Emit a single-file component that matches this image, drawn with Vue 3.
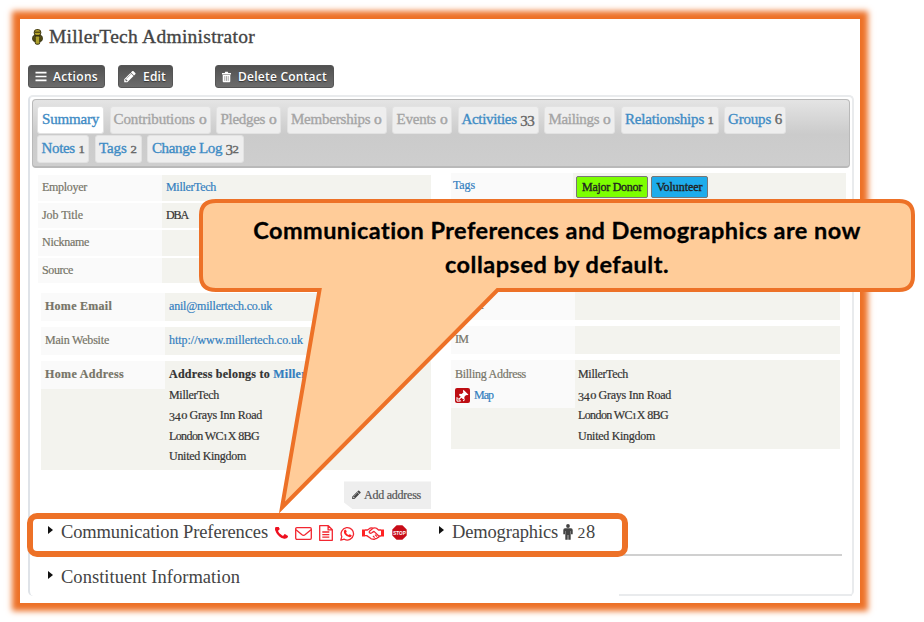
<script setup>
import { h } from 'vue'

// Sets letter spacing so that a label fills its intended measure.
const vFit = {
  mounted(el, { value }) {
    const natural = el.getBoundingClientRect().width
    el.style.letterSpacing = (value - natural) / el.textContent.length + 'px'
  },
}

// Splits digits off so they can be set as old-style figures.
const Txt = (props) =>
  h(
    'span',
    { class: 'txt' },
    props.t.split(/(\d)/).filter(Boolean).map((p) => {
      if (p === '0') return h('span', { class: 'fig fig-x fig-o' }, p)
      if (/[12]/.test(p)) return h('span', { class: 'fig fig-x' }, p)
      if (/[34579]/.test(p)) return h('span', { class: 'fig fig-d' }, p)
      return p
    }),
  )
Txt.props = ['t']

const tabRows = [
  [
    { name: 'Summary', box: 67, fit: 57, active: true },
    { name: 'Contributions', n: '0', box: 101, fit: 93, empty: true },
    { name: 'Pledges', n: '0', box: 65, fit: 56, empty: true },
    { name: 'Memberships', n: '0', box: 100, fit: 91, empty: true },
    { name: 'Events', n: '0', box: 60, fit: 51, empty: true },
    { name: 'Activities', n: '33', box: 81, fit: 73 },
    { name: 'Mailings', n: '0', box: 71, fit: 62, empty: true },
    { name: 'Relationships', n: '1', box: 98, fit: 89 },
    { name: 'Groups', n: '6', box: 62, fit: 54 },
  ],
  [
    { name: 'Notes', n: '1', box: 52, fit: 43 },
    { name: 'Tags', n: '2', box: 47, fit: 38 },
    { name: 'Change Log', n: '32', box: 97, fit: 87 },
  ],
]

const basics = [
  { label: 'Employer', lf: 45, value: 'MillerTech', vf: 50, link: true },
  { label: 'Job Title', lf: 41, value: 'DBA', vf: 22 },
  { label: 'Nickname', lf: 47 },
  { label: 'Source', lf: 31 },
]
const address = [
  { t: 'MillerTech', f: 50 },
  { t: '340 Grays Inn Road', f: 93 },
  { t: 'London WC1X 8BG', f: 90 },
  { t: 'United Kingdom', f: 77 },
]
const pencil =
  'M491 1536l91-91-235-235-91 91v107h128v128h107zm523-928q0-22-22-22-10 0-17 7l-542 542q-7 7-7 17 0 22 22 22 10 0 17-7l542-542q7-7 7-17zm-54-192l416 416-832 832h-416v-416zm683 96q0 53-37 90l-166 166-416-416 166-165q36-38 90-38 53 0 91 38l235 234q37 39 37 91z'
const phone =
  'M1600 1240q0 27-10 70.5t-21 68.5q-21 50-122 106-94 51-186 51-27 0-53-3.5t-57-12.5-47-14.5-55.5-20.5-49.5-18q-98-35-175-83-127-79-264-216t-216-264q-48-77-83-175-3-9-18-49.5t-20.5-55.5-14.5-47-12.5-57-3.5-53q0-92 51-186 56-101 106-122 25-11 68.5-21t70.5-10q14 0 21 3 18 6 53 76 11 19 30 54t35 63.5 31 53.5q3 4 17.5 25t21.5 35.5 7 28.5q0 20-28.5 50t-62 55-62 53-28.5 46q0 9 5 22.5t8.5 20.5 14 24 11.5 19q76 137 174 235t235 174q2 1 19 11.5t24 14 20.5 8.5 22.5 5q18 0 46-28.5t53-62 55-62 50-28.5q14 0 28.5 7t35.5 21.5 25 17.5q25 15 53.5 31t63.5 35 54 30q70 35 76 53 3 7 3 21z'
</script>

<template>
  <div class="page">
    <main class="frame">
      <header class="title">
        <svg class="person" viewBox="0 0 11 16">
          <rect x="2.2" y=".6" width="6.6" height="6" rx="2.6" fill="#b9a62c" stroke="#3d3710" />
          <path d="M2.6 3.2h5.8" stroke="#3d3710" stroke-width="1.2" />
          <rect x=".7" y="6.4" width="9.6" height="6" rx="2.2" fill="#5b5215" stroke="#353010" />
          <rect x="3.2" y="7" width="4.6" height="8.2" rx="1.5" fill="#ada02d" stroke="#353010" />
        </svg>
        <h1><span v-fit="206">MillerTech Administrator</span></h1>
      </header>

      <div class="actions">
        <button class="btn b-actions">
          <svg viewBox="0 0 12 11" class="i-bars"><path d="M.5 1.7h11M.5 5.5h11M.5 9.3h11" stroke="#fff" stroke-width="1.7" /></svg>
          <span v-fit="45">Actions</span>
        </button>
        <button class="btn b-edit">
          <svg viewBox="100 180 1600 1550" class="i-pen"><path :d="pencil" fill="#fff" /></svg>
          <span v-fit="23">Edit</span>
        </button>
        <button class="btn b-delete">
          <svg viewBox="0 0 10 12" class="i-trash">
            <path d="M0 1.6h3L3.6.3h2.8L7 1.6h3v1.5H0zM.8 3.7h8.4v7q0 1-1 1H1.8q-1 0-1-1z" fill="#fff" />
            <path d="M3.1 5v5.3M5 5v5.3M6.9 5v5.3" stroke="#777" stroke-width=".7" />
          </svg>
          <span v-fit="89">Delete Contact</span>
        </button>
      </div>

      <section class="panel">
        <nav class="tabs">
          <div v-for="(row, i) in tabRows" :key="i" class="tab-row">
            <div
              v-for="tab in row"
              :key="tab.name"
              class="tab"
              :class="{ active: tab.active, empty: tab.empty }"
              :style="{ width: tab.box + 'px' }"
            >
              <span v-fit="tab.fit">{{ tab.name }}<em v-if="tab.n">&nbsp;<Txt :t="tab.n" /></em></span>
            </div>
          </div>
        </nav>

        <div class="columns">
          <div class="left">
            <div class="basics">
              <div v-for="r in basics" :key="r.label" class="row">
                <div class="label"><span v-fit="r.lf">{{ r.label }}</span></div>
                <div class="value"><span v-if="r.value" v-fit="r.vf" :class="{ link: r.link }">{{ r.value }}</span></div>
              </div>
            </div>
            <div class="details">
              <div class="row">
                <div class="label strong"><span v-fit="67">Home Email</span></div>
                <div class="value"><span v-fit="103" class="link">anil@millertech.co.uk</span></div>
              </div>
              <div class="row">
                <div class="label"><span v-fit="64">Main Website</span></div>
                <div class="value"><span v-fit="134" class="link">http://www.millertech.co.uk</span></div>
              </div>
              <div class="row addr home">
                <div class="label strong"><span v-fit="79">Home Address</span></div>
                <div class="value">
                  <p class="strong"><span v-fit="163">Address belongs to <b class="link">MillerTech</b></span></p>
                  <p v-for="a in address" :key="a.t"><span v-fit="a.f"><Txt :t="a.t" /></span></p>
                </div>
              </div>
            </div>
            <div class="add">
              <svg viewBox="100 180 1600 1550"><path :d="pencil" fill="#444" /></svg>
              <span v-fit="57">Add address</span>
            </div>
          </div>

          <div class="right">
            <div class="row tagrow">
              <div class="label"><span v-fit="22" class="link">Tags</span></div>
              <div class="value">
                <span class="tag green"><span v-fit="60">Major Donor</span></span>
                <span class="tag blue"><span v-fit="46">Volunteer</span></span>
              </div>
            </div>
            <div class="details">
              <div class="row">
                <div class="label"><span v-fit="29">Phone</span></div>
                <div class="value"></div>
              </div>
              <div class="row">
                <div class="label"><span v-fit="13">IM</span></div>
                <div class="value"></div>
              </div>
              <div class="row addr billing">
                <div class="label">
                  <span v-fit="71">Billing Address</span>
                  <div class="map">
                    <svg viewBox="0 0 15 15">
                      <rect width="15" height="15" rx="2" fill="#bd0d12" />
                      <path d="M8.500 1.800l5 4.900-1.700.6-.7-.4-1.800 2 .2 1.800-1.200.8-1.800-1.800L4.600 11.600l-.9-.9 2-2L3.900 6.900l.9-1.100 1.800.2 1.900-1.800-.6-.9z" fill="#fff" />
                      <path d="M2 9.500v3.600h3.600L2 9.500M8 13l2-1.500" fill="none" stroke="#fff" />
                    </svg>
                    <span v-fit="19" class="link">Map</span>
                  </div>
                </div>
                <div class="value">
                  <p v-for="a in address" :key="a.t"><span v-fit="a.f"><Txt :t="a.t" /></span></p>
                </div>
              </div>
            </div>
          </div>
        </div>

        <div class="collapsed">
          <div class="acc prefs">
            <i class="arrow"></i>
            <span v-fit="207">Communication Preferences</span>
            <div class="icons">
              <svg class="i1" viewBox="192 256 1408 1408"><path :d="phone" fill="#ee1020" /></svg>
              <svg class="i2" viewBox="0 0 17 13"><rect x=".7" y=".7" width="15.600" height="11.600" rx="1.200" /><path d="M1 2.800l5.700 4.800q1.800 1.400 3.600 0L16 2.800" /></svg>
              <svg class="i3" viewBox="0 0 14 16"><path d="M.7.7h8.600l4 4v10.600H.7zM9.100.9v4h4M3.300 7h7M3.300 9.600h7M3.300 12.200h7" /></svg>
              <svg class="i4" viewBox="0 0 15 15">
                <path d="M.8 14.200l1-3.600a6.200 6.200 0 1 1 2.500 2.600z" />
                <path d="M4.700 3.700l1.200.1.900 2-.8 1q1 1.700 2.700 2.300l1-.9 2 1q0 1.800-2 2-3-.2-5-3-1.700-2.600 0-4.500z" fill="#f22" stroke="none" />
              </svg>
              <svg class="i5" viewBox="0 0 22 13">
                <path d="M0 2.400h3v7.200H0zM19 2.400h3v7.200h-3z" fill="#f22" stroke="none" />
                <path d="M3 3h2.500L8 1.200q1.500-.7 3 0l-3.500 3q-.8 1.400.6 2 1.300.3 2.300-.8l1.600-1 5 4.800q.2 1.600-1.600 1.400-.4 1.300-2 1-.7 1-2.200.5-1.600.4-2.600-.8L4.700 8.600H3M11 1.200q2-.8 3.500 0L16.500 3H19M17 9h2M11 9l1.700 1.600M13 7.600l2 2" />
              </svg>
              <svg class="i6" viewBox="0 0 15 15"><path d="M4.600.3h5.800l4.300 4.300v5.800l-4.300 4.300H4.600L.3 10.400V4.600z" fill="#c80c18" stroke="none" /><text x="7.500" y="9.700" text-anchor="middle" textLength="12.500" lengthAdjust="spacingAndGlyphs">STOP</text></svg>
            </div>
          </div>
          <div class="acc">
            <i class="arrow"></i>
            <span v-fit="106">Demographics</span>
            <svg class="man" viewBox="0 0 10 16"><circle cx="5" cy="2" r="1.900" fill="#444" /><path d="M2 4.300h6q1.700 0 1.700 1.700v4.300H8V7h-.3v8.800H5.300V11h-.6v4.800H2.300V7H2v3.300H.3V6q0-1.700 1.700-1.700z" fill="#444" /></svg>
            <span v-fit="19"><Txt t="28" /></span>
          </div>
        </div>
        <hr />
        <div class="acc constituent">
          <i class="arrow"></i>
          <span v-fit="179">Constituent Information</span>
        </div>
        <div class="foot"></div>
      </section>
    </main>

    <div class="highlight"></div>

    <aside class="callout">
      <svg viewBox="0 0 924 622">
        <path
          d="M216 201H899Q913 201 913 215V276Q913 290 899 290H497.500L282 507.500 319.500 290H216Q201 290 201 276V215Q201 201 216 201Z"
          fill="#ffcc99" stroke="#ed7127" stroke-width="4"
        />
      </svg>
      <p class="message">
        <span v-fit="608">Communication Preferences and Demographics are now</span>
        <span v-fit="224">collapsed by default.</span>
      </p>
    </aside>
  </div>
</template>

<style>
body { background: #fff; }
.txt { white-space: pre; }
.fig { display: inline-block; line-height: 1; }
.fig-x { font-size: .74em; transform: scaleX(1.15); margin: 0 .05em; }
.fig-o { transform: scaleX(1.4); margin: 0 .12em; }
.fig-d { transform: translateY(.14em); }
</style>

<style scoped>
* { box-sizing: border-box; }
.page { position: relative; width: 924px; height: 622px; overflow: hidden; padding: 19px 0 0 20px; font-family: "Liberation Serif", serif; color: #333; white-space: nowrap; }
.frame { width: 840px; height: 584px; background: #fff; box-shadow: 0 0 6px 8px #ed7127; padding: 7px 6px 0 8px; }
.title { display: flex; height: 22px; align-items: center; padding-left: 4px; gap: 6px; }
.person { width: 11px; height: 16px; }
h1 { margin: 0; font-size: 19.500px; line-height: 22px; font-weight: 400; color: #444; -webkit-text-stroke: .35px #444; }
.actions { display: flex; margin-top: 17px; height: 23px; }
.btn { display: flex; align-items: center; height: 23px; padding: 0; border: 1px solid #555; border-radius: 3px; background: linear-gradient(#515151, #6c6c6c); color: #fff; font: 600 12px/20px "Open Sans", sans-serif; text-shadow: 0 1px 1px #333; }
.b-actions { width: 77px; padding-left: 6px; gap: 6px; margin-right: 13px; }
.b-edit { width: 55px; padding-left: 5px; gap: 7px; margin-right: 42px; }
.b-delete { width: 119px; padding-left: 6px; gap: 7px; }
.i-bars { width: 12px; height: 11px; }
.i-pen { width: 12px; height: 12px; }
.i-trash { width: 9px; height: 12px; }
.panel { margin-top: 7px; width: 826px; height: 501px; border: 2px solid #e9ebed; border-left-color: #dfe3e8; border-bottom: 0; border-radius: 5px; padding: 2px 2px 0; display: flex; flex-direction: column; }
.tabs { height: 69px; flex: none; border: 1px solid #b9b9b9; border-bottom-width: 2px; border-radius: 4px; background: linear-gradient(#e4e4e4, #cbcbcb 52%, #cecece); padding: 6px 4px; display: flex; flex-direction: column; gap: 1px; }
.tab-row { display: flex; gap: 5.500px; }
.tab { flex: none; height: 28px; border-radius: 3px; background: #eee; border: 1px solid #e2e2e2; color: #3f8cc5; font-size: 15px; line-height: 24px; display: flex; justify-content: center; -webkit-text-stroke: .35px; }
.tab.active { background: #fff; }
.tab.empty, .tab.empty em { color: #a5a5a5; }
.tab em { font-style: normal; color: #666; }
.columns { display: flex; height: 345px; font-size: 12px; -webkit-text-stroke: .2px; }
.left { width: 399px; flex: none; padding: 7px 0 0 6px; margin-right: 20px; }
.basics { display: flex; flex-direction: column; gap: 2px; }
.row { display: flex; }
.basics .row { height: 25.600px; }
.label { width: 124px; background: #fafafa; color: #777568; line-height: 24px; padding-left: 4px; }
.value { flex: 1; background: #f3f3ee; color: #333; line-height: 24px; padding-left: 4px; }
.link { color: #337fc0; }
.strong { font-weight: 700; }
.left .details { margin: 10px 0 0 3px; }
.details { display: flex; flex-direction: column; gap: 6px; }
.details .row { height: 28px; }
.details .label { width: 124px; line-height: 27px; height: 28px; }
.details .value { line-height: 27px; }
.details .row.addr { background: #f3f3ee; }
.details .home { height: 109px; }
.details .billing { height: 89px; }
.details .billing .label { height: 48px; padding-top: 1px; }
p { margin: 0; line-height: 20.500px; }
.home .value { padding-top: 3px; }
.billing .value { padding-top: 4px; padding-left: 3px; }
.map { display: flex; align-items: center; gap: 4px; line-height: 15px; }
.map svg { width: 15px; height: 15px; }
.add { margin: 11px 0 0 auto; width: 87px; height: 28px; background: #eee; clip-path: polygon(0 0, 100% 0, 100% 100%, 9px 100%, 0 21px); display: flex; align-items: center; gap: 3px; padding-left: 8px; color: #555; }
.add svg { width: 9px; height: 10px; }
.right { padding-top: 5px; width: 395px; flex: none; }
.tagrow { height: 27px; margin-bottom: 92px; }
.tagrow .label { padding-left: 2px; width: 122px; }
.tagrow .value { display: flex; padding: 3px 0 0 3px; gap: 3px; }
.tag { height: 22px; border: 1px solid #777; border-radius: 2px; line-height: 20px; display: flex; justify-content: center; color: #222; -webkit-text-stroke: .35px; }
.green { width: 72px; background: #7dff00; }
.blue { width: 57px; background: #1eaceb; }
.right .details { width: 389px; }
.collapsed { display: flex; height: 39px; flex: none; padding-top: 8px; }
.acc { display: flex; align-items: flex-start; font-size: 18.500px; line-height: 24px; color: #444; }
.arrow { width: 0; height: 0; border: 4px solid transparent; border-left: 5px solid #111; border-right: 0; margin: 6px 8px 0 0; }
.prefs { width: 407px; padding-left: 16px; }
.prefs .arrow, .constituent .arrow { margin-right: 8px; }
.icons { display: flex; margin: 5px 0 0 7px; height: 16px; align-items: center; }
.icons svg { fill: none; stroke: #f22630; stroke-width: 1.300; flex: none; }
.icons path { stroke-linejoin: round; }
.icons .i1 { width: 13px; height: 13px; stroke: none; }
.icons .i2 { width: 17px; height: 13px; margin-left: 7px; }
.icons .i3 { width: 14px; height: 16px; margin-left: 7px; }
.icons .i4 { width: 15px; height: 15px; margin-left: 7px; }
.icons .i5 { width: 22px; height: 13px; margin-left: 7px; }
.icons .i6 { width: 15px; height: 15px; margin: -2px 0 0 8px; stroke: none; overflow: visible; }
.icons text { font: 700 6px "Liberation Sans", sans-serif; fill: #fff; }
.acc .arrow + span { flex: none; }
.man { width: 10px; height: 16px; margin: 4px 4px 0 5px; }
hr { width: 222px; height: 2px; border: 0; margin: 3px 8px 0 auto; background: #d0d0d0; flex: none; }
.constituent { padding-left: 16px; margin-top: 9px; height: 29px; flex: none; }
.foot { width: 233px; height: 2px; background: #e9ebed; margin: auto -2px 0 auto; flex: none; }
.highlight { position: absolute; left: 27px; top: 513px; width: 601px; height: 44px; border: 6px solid #ed7127; border-radius: 10px; }
.callout { position: absolute; inset: 0; }
.callout svg { display: block; width: 924px; height: 622px; }
.message { position: absolute; left: 201px; top: 213px; width: 712px; display: flex; flex-direction: column; align-items: center; font: 700 23.500px/34px Lato, sans-serif; color: #000; -webkit-text-stroke: .3px #000; }
</style>
